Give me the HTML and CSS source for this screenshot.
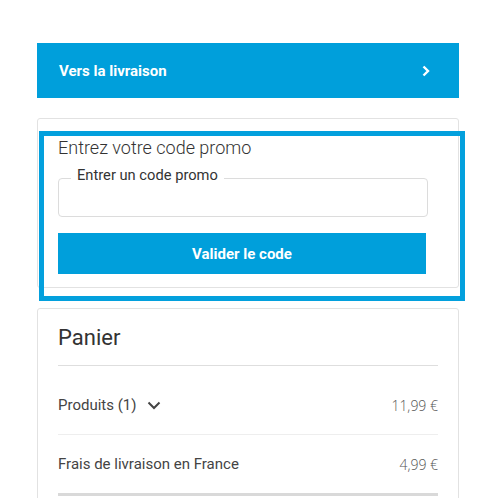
FILE: index.html
```html
<!DOCTYPE html>
<html lang="fr">
<head>
<meta charset="utf-8">
<link rel="stylesheet" href="styles.css">
</head>
<body>
<div class="page">
  <a class="cta">
    <span>Vers la livraison</span>
    <svg class="cta-chevron" width="10" height="12" viewBox="0 0 10 12"><path d="M2.5 1.5 L7 6 L2.5 10.5" fill="none" stroke="#fff" stroke-width="2.4"/></svg>
  </a>

  <section class="card promo">
    <h2 class="promo-title">Entrez votre code promo</h2>
    <fieldset class="field">
      <legend>Entrer un code promo</legend>
      <input class="field-input" type="text">
    </fieldset>
    <button class="btn">Valider le code</button>
    <div class="highlight"></div>
  </section>

  <section class="card basket">
    <h2 class="basket-title">Panier</h2>
    <div class="row">
      <span class="row-label">Produits (1)
        <svg class="chev-down" width="14" height="10" viewBox="0 0 14 10"><path d="M1.5 2.5 L7 8 L12.5 2.5" fill="none" stroke="#444" stroke-width="2"/></svg>
      </span>
      <span class="price">11,99 €</span>
    </div>
    <div class="row">
      <span class="row-label">Frais de livraison en France</span>
      <span class="price">4,99 €</span>
    </div>
    <div class="total-line"></div>
  </section>
</div>
</body>
</html>
```

FILE: styles.css
```css
html, body {
  margin: 0;
  background: #fff;
  font-family: Roboto, "Liberation Sans", sans-serif;
  color: #333;
}

.page {
  width: 422px;
  padding: 43px 30px 0 37px;
  display: flex;
  flex-direction: column;
}

.cta {
  height: 55px;
  background: #009fdb;
  color: #fff;
  display: flex;
  align-items: center;
  justify-content: space-between;
  padding: 0 28px 0 22px;
  font-size: 15px;
  font-weight: 700;
}

.cta-chevron {
  display: block;
}

.card {
  border: 1px solid #e2e2e2;
  border-radius: 3px;
  background: #fff;
}

.promo {
  position: relative;
  margin-top: 20px;
  padding: 18px 30px 13px 20px;
}

.promo-title {
  margin: 0;
  font-size: 18px;
  font-weight: 300;
  line-height: 22px;
  color: #333;
}

.field {
  margin: 7px 0 0 0;
  padding: 0 0 0 12px;
  border: 1px solid #dcdcdc;
  border-radius: 4px;
  height: 51px;
  box-sizing: border-box;
  width: 370px;
}

.field legend {
  padding: 0 6px 6px 6px;
  font-size: 14.7px;
  line-height: 18px;
  color: #333;
}

.field-input {
  border: 0;
  outline: 0;
  width: 340px;
  height: 20px;
  background: transparent;
}

.btn {
  display: block;
  margin-top: 16px;
  width: 368px;
  height: 41px;
  border: 0;
  background: #009fdb;
  color: #fff;
  font-family: Roboto, "Liberation Sans", sans-serif;
  font-size: 15px;
  font-weight: 700;
}

.highlight {
  position: absolute;
  left: 1px;
  top: 12px;
  width: 416px;
  height: 160px;
  border: 5px solid #03a0dd;
  pointer-events: none;
}

.basket {
  margin-top: 20px;
  padding: 11px 20px 0 20px;
}

.basket-title {
  margin: 0 0 10px 0;
  padding-bottom: 9px;
  font-size: 22px;
  font-weight: 400;
  line-height: 36px;
  color: #333;
  border-bottom: 1px solid #dedede;
}

.row {
  height: 58px;
  display: flex;
  align-items: center;
  justify-content: space-between;
  border-bottom: 1px solid #eeeeee;
  font-size: 15px;
  color: #444;
}

.row + .row {
  border-bottom: 0;
}

.row-label {
  display: flex;
  align-items: center;
  gap: 10px;
}

.price {
  font-family: "Open Sans", sans-serif;
  font-size: 14px;
  font-weight: 300;
  color: #555;
}

.total-line {
  border-top: 3px solid #d9d9d9;
  height: 20px;
}
```
